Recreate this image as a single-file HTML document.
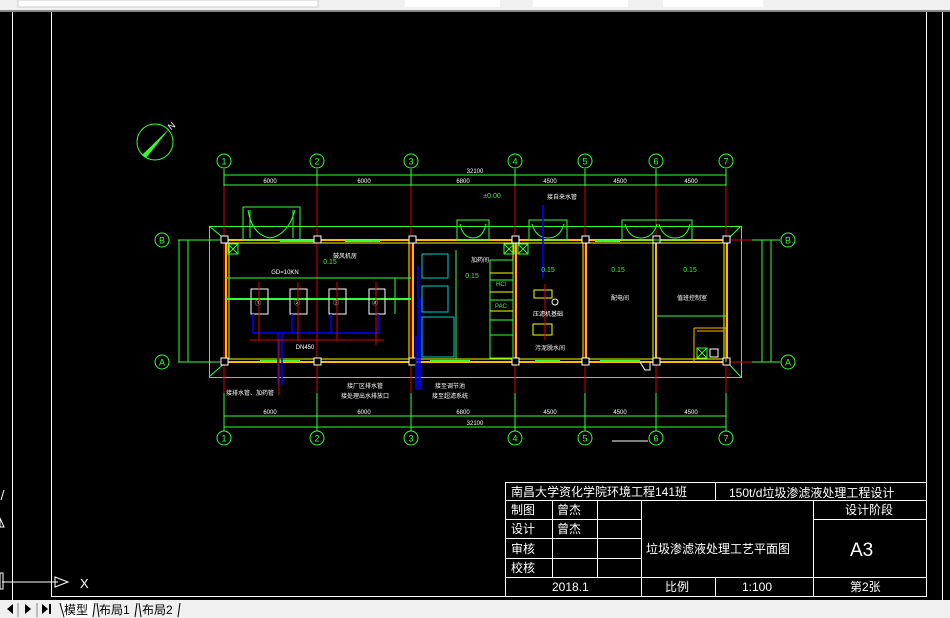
<!DOCTYPE html>
<html><head><meta charset="utf-8"><style>
html,body{margin:0;padding:0;width:950px;height:618px;overflow:hidden;background:#000;font-family:"Liberation Sans","Noto Sans CJK SC",sans-serif}
svg{position:absolute;left:0;top:0}
</style></head><body>
<svg width="950" height="618" viewBox="0 0 950 618" xmlns="http://www.w3.org/2000/svg" font-family="'Liberation Sans','Noto Sans CJK SC',sans-serif">
<rect x="0" y="0" width="950" height="11" fill="#f0f0f0"/>
<rect x="18" y="0" width="300" height="7" fill="#fff" stroke="#ccc"/>
<rect x="405" y="0" width="95" height="7" fill="#fff"/>
<rect x="533" y="0" width="95" height="7" fill="#fff"/>
<rect x="663" y="0" width="100" height="7" fill="#fff"/>
<rect x="0" y="10" width="950" height="2" fill="#888"/>
<rect x="0" y="12" width="950" height="588" fill="#000"/>
<line x1="12.5" y1="12" x2="12.5" y2="600" stroke="#fff"/>
<line x1="926.5" y1="12" x2="926.5" y2="596" stroke="#fff"/>
<line x1="942.5" y1="12" x2="942.5" y2="600" stroke="#fff"/>
<polyline points="51.5,12 51.5,596.5 926.5,596.5" fill="none" stroke="#fff"/>
<line x1="2" y1="582" x2="58" y2="582" stroke="#fff"/>
<polygon points="55,577 68,582 55,587" fill="none" stroke="#fff"/>
<text x="80" y="588" fill="#fff" font-size="13">X</text>
<line x1="1" y1="500" x2="4" y2="490" stroke="#fff"/>
<polygon points="0,518 4,527 0,527" fill="none" stroke="#fff"/>
<rect x="0" y="573" width="3" height="16" fill="none" stroke="#fff"/>
<rect x="0" y="600" width="950" height="18" fill="#f0f0f0"/>
<g fill="#000"><polygon points="13,604 7,609 13,614"/><polygon points="25,604 31,609 25,614"/><polygon points="42,604 48,609 42,614"/><rect x="49" y="604" width="2" height="10"/></g>
<line x1="18" y1="603" x2="18" y2="617" stroke="#888"/><line x1="37" y1="603" x2="37" y2="617" stroke="#888"/>
<rect x="62" y="601" width="32" height="16" fill="#fff"/>
<text x="64" y="614" font-size="12" fill="#000">模型</text>
<text x="99" y="614" font-size="12" fill="#000">布局1</text>
<text x="142" y="614" font-size="12" fill="#000">布局2</text>
<path d="M60,603 L64,617 M95,603 L93,617 M97,603 L99,617 M137,603 L135,617 M139,603 L141,617 M180,603 L178,617" stroke="#000"/>

<circle cx="155" cy="142" r="18" fill="none" stroke="#3f3"/>
<polygon points="142,155 170,128 146,158" fill="#3f3"/>
<text x="168" y="130" fill="#fff" font-size="9" transform="rotate(-40 170 126)">N</text>

<g stroke-width="1" fill="none">
<rect x="209.5" y="226.5" width="532" height="151" stroke="#3f3"/>
<path d="M209,226 L226,240 M741,226 L727,240 M209,377 L226,362 M741,377 L727,362" stroke="#3f3"/>
<g stroke="#d00">
<line x1="224" y1="186" x2="224" y2="393"/><line x1="317" y1="186" x2="317" y2="393"/>
<line x1="411" y1="186" x2="411" y2="393"/><line x1="515" y1="186" x2="515" y2="393"/>
<line x1="585" y1="186" x2="585" y2="393"/><line x1="656" y1="186" x2="656" y2="393"/>
<line x1="726" y1="186" x2="726" y2="393"/>
<line x1="200" y1="240" x2="752" y2="240"/><line x1="200" y1="362" x2="752" y2="362"/>
</g>
<rect x="226" y="240" width="501" height="122" stroke="#fb0" stroke-width="2"/>
<rect x="229" y="243" width="495" height="116" stroke="#ff0"/>
<g stroke="#fb0" stroke-width="2">
<line x1="413" y1="240" x2="413" y2="362"/><line x1="516" y1="240" x2="516" y2="362"/>
<line x1="586" y1="240" x2="586" y2="362"/><line x1="656" y1="240" x2="656" y2="362"/>
</g>
<g stroke="#ff0"><line x1="409" y1="243" x2="409" y2="359"/><line x1="513" y1="243" x2="513" y2="359"/><line x1="583" y1="243" x2="583" y2="359"/><line x1="653" y1="243" x2="653" y2="359"/></g>
<g stroke="#3f3" stroke-width="2"><line x1="280" y1="241" x2="315" y2="241"/><line x1="345" y1="241" x2="380" y2="241"/><line x1="595" y1="241" x2="620" y2="241"/><line x1="260" y1="361" x2="300" y2="361"/><line x1="430" y1="361" x2="470" y2="361"/><line x1="535" y1="361" x2="560" y2="361"/><line x1="600" y1="361" x2="640" y2="361"/></g>
<g stroke="#fff" fill="#000">
<rect x="221" y="236" width="7" height="7"/><rect x="314" y="236" width="7" height="7"/><rect x="409" y="236" width="7" height="7"/><rect x="512" y="236" width="7" height="7"/><rect x="582" y="236" width="7" height="7"/><rect x="653" y="236" width="7" height="7"/><rect x="723" y="236" width="7" height="7"/>
<rect x="221" y="358" width="7" height="7"/><rect x="314" y="358" width="7" height="7"/><rect x="409" y="358" width="7" height="7"/><rect x="512" y="358" width="7" height="7"/><rect x="582" y="358" width="7" height="7"/><rect x="653" y="358" width="7" height="7"/><rect x="723" y="358" width="7" height="7"/>
</g>
<g stroke="#3f3">
<rect x="243" y="207" width="57" height="33"/><path d="M248,210 Q252,235 270,238 Q288,235 295,210 M250,210 L250,238 M293,210 L293,238"/>
<rect x="457" y="220" width="32" height="20"/><path d="M460,224 Q463,238 473,238 Q483,238 486,224"/>
<rect x="529" y="220" width="38" height="20"/><path d="M532,224 Q536,238 548,238 Q560,238 564,224"/>
<rect x="622" y="220" width="70" height="20"/><path d="M625,224 Q629,238 641,238 Q653,238 657,224 M659,224 Q663,238 675,238 Q687,238 690,224"/>
</g>
<line x1="226" y1="299" x2="411" y2="299" stroke="#3f3" stroke-width="2"/>
<line x1="226" y1="278" x2="411" y2="278" stroke="#3f3"/>
<line x1="395" y1="278" x2="395" y2="314" stroke="#3f3"/>
<g stroke="#fff"><rect x="251" y="289" width="17" height="25"/><rect x="290" y="289" width="17" height="25"/><rect x="329" y="289" width="17" height="25"/><rect x="369" y="289" width="16" height="25"/></g>
<g fill="#fff" font-size="6" stroke="none"><text x="255" y="305">①</text><text x="294" y="305">②</text><text x="333" y="305">③</text><text x="372" y="305">④</text></g>
<g stroke="#00f" stroke-width="1.5"><path d="M253,314 V333 H378 V314 M292,314 V333 M331,314 V333 M278,333 V385 M282,333 V385"/></g>
<g stroke="#d00"><path d="M250,340 H384 M259,282 V340 M298,282 V340 M337,282 V340 M376,282 V345 M279,340 V395"/></g>
<g stroke="#0cc"><rect x="422" y="254" width="26" height="24"/><rect x="422" y="286" width="26" height="26"/><rect x="422" y="317" width="32" height="40"/></g>
<g stroke="#00f" stroke-width="1.5"><path d="M418,266 V390 M420,298 V390 M416,336 V390"/></g>
<g stroke="#3f3"><line x1="456" y1="250" x2="456" y2="359"/><rect x="490" y="260" width="23" height="98"/><line x1="490" y1="280" x2="513" y2="280"/><line x1="490" y1="300" x2="513" y2="300"/><line x1="490" y1="320" x2="513" y2="320"/><line x1="490" y1="335" x2="513" y2="335"/></g>
<g stroke="#ff0"><line x1="490" y1="273" x2="513" y2="273"/><line x1="490" y1="292" x2="513" y2="292"/><line x1="490" y1="311" x2="513" y2="311"/></g>
<line x1="543" y1="205" x2="543" y2="278" stroke="#00f" stroke-width="1.5"/>
<rect x="534" y="290" width="18" height="8" stroke="#ff0"/><rect x="533" y="324" width="19" height="11" stroke="#ff0"/>
<line x1="545" y1="284" x2="545" y2="340" stroke="#d00"/>
<circle cx="555" cy="302" r="3" stroke="#fff"/>
<line x1="656" y1="316" x2="726" y2="316" stroke="#3f3"/>
<path d="M694,328 H726 V362 M694,328 V362 M697,331 H724" stroke="#fb0"/>
<rect x="697" y="348" width="10" height="10" stroke="#3f3"/><path d="M697,348 L707,358 M707,348 L697,358" stroke="#3f3"/>
<rect x="710" y="349" width="8" height="8" stroke="#fff"/>
<rect x="228" y="244" width="10" height="10" stroke="#3f3"/><path d="M228,244 L238,254 M238,244 L228,254" stroke="#3f3"/>
<rect x="504" y="244" width="10" height="10" stroke="#3f3"/><path d="M504,244 L514,254 M514,244 L504,254" stroke="#3f3"/>
<rect x="518" y="244" width="10" height="10" stroke="#3f3"/><path d="M518,244 L528,254 M528,244 L518,254" stroke="#3f3"/>
<path d="M640,362 L645,370 H650 V362" stroke="#fff"/>
<g stroke="#3f3">
<line x1="224" y1="175" x2="726" y2="175"/><line x1="224" y1="185" x2="726" y2="185"/>
<line x1="224" y1="416" x2="726" y2="416"/><line x1="224" y1="427" x2="726" y2="427"/>
<path d="M224,169 V186 M317,169 V186 M411,169 V186 M515,169 V186 M585,169 V186 M656,169 V186 M726,169 V186"/>
<path d="M224,393 V432 M317,393 V432 M411,393 V432 M515,393 V432 M585,393 V432 M656,393 V432 M726,393 V432"/>
<line x1="178" y1="240" x2="220" y2="240"/><line x1="178" y1="362" x2="220" y2="362"/>
<line x1="179" y1="240" x2="179" y2="362"/><line x1="188" y1="240" x2="188" y2="362"/>
<line x1="752" y1="240" x2="780" y2="240"/><line x1="752" y1="362" x2="780" y2="362"/>
<line x1="762" y1="240" x2="762" y2="362"/><line x1="771" y1="240" x2="771" y2="362"/>
</g>
<g stroke="#3f3" fill="#000">
<circle cx="224" cy="161" r="7"/><circle cx="317" cy="161" r="7"/><circle cx="411" cy="161" r="7"/><circle cx="515" cy="161" r="7"/><circle cx="585" cy="161" r="7"/><circle cx="656" cy="161" r="7"/><circle cx="726" cy="161" r="7"/>
<circle cx="224" cy="438" r="7"/><circle cx="317" cy="438" r="7"/><circle cx="411" cy="438" r="7"/><circle cx="515" cy="438" r="7"/><circle cx="585" cy="438" r="7"/><circle cx="656" cy="438" r="7"/><circle cx="726" cy="438" r="7"/>
<circle cx="162" cy="240" r="7"/><circle cx="162" cy="362" r="7"/><circle cx="788" cy="240" r="7"/><circle cx="788" cy="362" r="7"/>
</g>
<line x1="612" y1="441" x2="648" y2="441" stroke="#fff"/>
</g>
<g fill="#3f3" font-size="9" text-anchor="middle">
<text x="224" y="164.5">1</text><text x="317" y="164.5">2</text><text x="411" y="164.5">3</text><text x="515" y="164.5">4</text><text x="585" y="164.5">5</text><text x="656" y="164.5">6</text><text x="726" y="164.5">7</text>
<text x="224" y="441.5">1</text><text x="317" y="441.5">2</text><text x="411" y="441.5">3</text><text x="515" y="441.5">4</text><text x="585" y="441.5">5</text><text x="656" y="441.5">6</text><text x="726" y="441.5">7</text>
<text x="162" y="243.5">B</text><text x="162" y="365.5">A</text><text x="788" y="243.5">B</text><text x="788" y="365.5">A</text>
<text x="492" y="198" font-size="7">±0.00</text><text x="330" y="264" font-size="7">0.15</text><text x="472" y="278" font-size="7">0.15</text><text x="548" y="272" font-size="7">0.15</text><text x="618" y="272" font-size="7">0.15</text><text x="690" y="272" font-size="7">0.15</text>
<text x="501" y="286" font-size="6">HCl</text><text x="501" y="308" font-size="6">PAC</text>
</g>
<g fill="#fff" font-size="6" text-anchor="middle">
<text x="475" y="173">32100</text><text x="270" y="183">6000</text><text x="364" y="183">6000</text><text x="463" y="183">6800</text><text x="550" y="183">4500</text><text x="620" y="183">4500</text><text x="691" y="183">4500</text>
<text x="270" y="414">6000</text><text x="364" y="414">6000</text><text x="463" y="414">6800</text><text x="550" y="414">4500</text><text x="620" y="414">4500</text><text x="691" y="414">4500</text><text x="475" y="425">32100</text>
<text x="345" y="258">鼓风机房</text><text x="480" y="262">加药间</text><text x="548" y="316">压滤机基础</text><text x="550" y="350">污泥脱水间</text><text x="620" y="300">配电间</text><text x="692" y="300">值班控制室</text>
<text x="562" y="199">接自来水管</text><text x="305" y="349">DN450</text><text x="285" y="274">GD=10KN</text>
<text x="250" y="395">接排水管、加药管</text><text x="365" y="388">接厂区排水管</text><text x="365" y="398">接处理出水排放口</text><text x="450" y="388">接至调节池</text><text x="450" y="398">接至超滤系统</text>
</g>
<g stroke="#fff" fill="none">
<rect x="505.5" y="482.5" width="421" height="114"/>
<line x1="505" y1="500.5" x2="927" y2="500.5"/>
<line x1="715.5" y1="482" x2="715.5" y2="500"/>
<line x1="505" y1="519.5" x2="641" y2="519.5"/><line x1="813" y1="519.5" x2="927" y2="519.5"/>
<line x1="505" y1="538.5" x2="641" y2="538.5"/>
<line x1="505" y1="558.5" x2="641" y2="558.5"/>
<line x1="505" y1="577.5" x2="927" y2="577.5"/>
<line x1="552.5" y1="500" x2="552.5" y2="577"/>
<line x1="597.5" y1="500" x2="597.5" y2="577"/>
<line x1="641.5" y1="500" x2="641.5" y2="597"/>
<line x1="715.5" y1="577" x2="715.5" y2="597"/>
<line x1="813.5" y1="500" x2="813.5" y2="597"/>
</g>
<g fill="#fff" font-size="12">
<text x="511" y="496">南昌大学资化学院环境工程141班</text>
<text x="729" y="497">150t/d垃圾渗滤液处理工程设计</text>
<text x="511" y="514">制图</text><text x="557" y="514">曾杰</text>
<text x="511" y="533">设计</text><text x="557" y="533">曾杰</text>
<text x="511" y="553">审核</text><text x="511" y="572">校核</text>
<text x="845" y="514">设计阶段</text>
<text x="646" y="553">垃圾渗滤液处理工艺平面图</text>
<text x="850" y="556" font-size="19">A3</text>
<text x="552" y="591">2018.1</text><text x="665" y="591">比例</text><text x="742" y="591">1:100</text><text x="850" y="591">第2张</text>
</g>
</svg>
</body></html>
